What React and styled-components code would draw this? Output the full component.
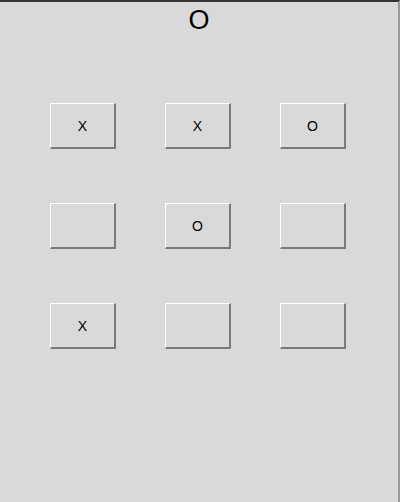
import React, { useState } from 'react';
import styled, { createGlobalStyle } from 'styled-components';

const GlobalStyle = createGlobalStyle`
  html, body {
    margin: 0;
    padding: 0;
    background: #d9d9d9;
  }
`;

const Window = styled.div`
  box-sizing: border-box;
  width: 400px;
  height: 502px;
  background: #d9d9d9;
  border-top: 2px solid #333333;
  border-right: 2px solid #9a9a9a;
  font-family: "Liberation Sans", Arial, sans-serif;
  color: #000;
`;

const Turn = styled.div`
  text-align: center;
  font-size: 27px;
  line-height: 32px;
  height: 32px;
  padding-top: 2px;
`;

const Board = styled.div`
  display: grid;
  grid-template-columns: repeat(3, 66px);
  grid-auto-rows: 46px;
  column-gap: 49px;
  row-gap: 54px;
  padding-left: 50px;
  margin-top: 67px;
`;

const Cell = styled.button`
  box-sizing: border-box;
  width: 66px;
  height: 46px;
  margin: 0;
  padding: 0;
  background: #d9d9d9;
  border-style: solid;
  border-width: 1px 2px 2px 1px;
  border-color: #ffffff #7a7a7a #7a7a7a #ffffff;
  font-family: "Liberation Sans", Arial, sans-serif;
  font-size: 14px;
  color: #000;
  cursor: pointer;
`;

export default function App() {
  const [cells, setCells] = useState(['X', 'X', 'O', '', 'O', '', 'X', '', '']);
  const [turn, setTurn] = useState('O');

  const play = (i) => {
    if (cells[i]) return;
    const next = cells.slice();
    next[i] = turn;
    setCells(next);
    setTurn(turn === 'X' ? 'O' : 'X');
  };

  return (
    <>
      <GlobalStyle />
      <Window>
        <Turn>{turn}</Turn>
        <Board>
          {cells.map((c, i) => (
            <Cell key={i} onClick={() => play(i)}>{c}</Cell>
          ))}
        </Board>
      </Window>
    </>
  );
}
